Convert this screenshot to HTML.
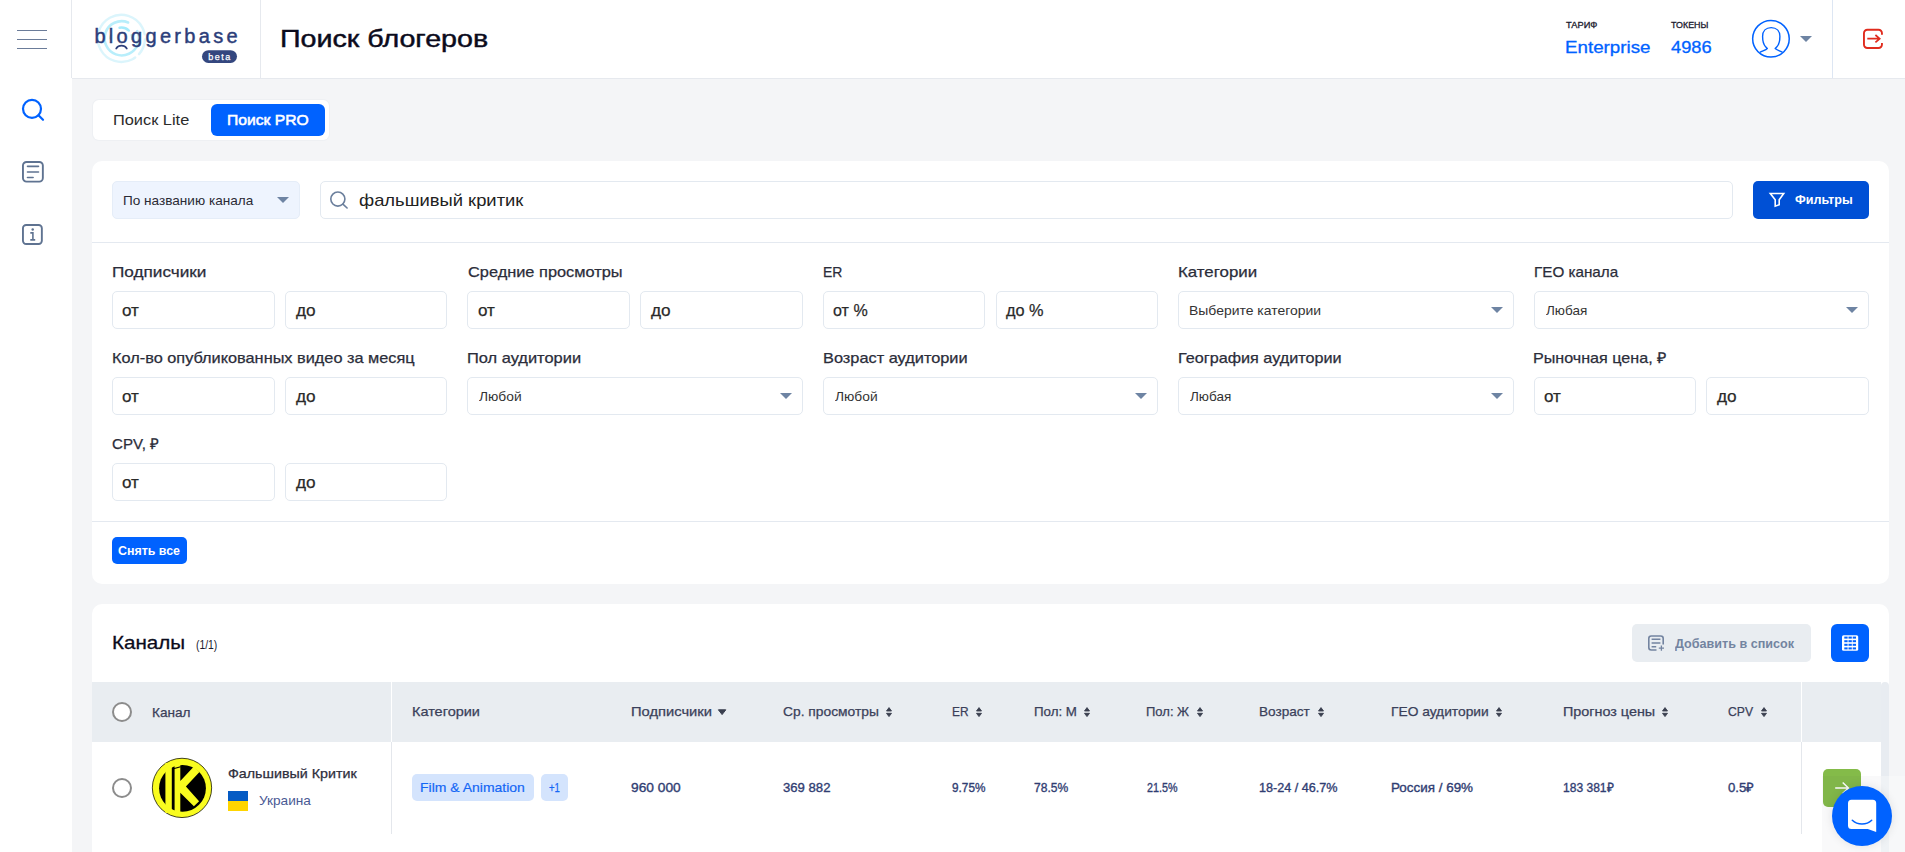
<!DOCTYPE html>
<html lang="ru">
<head>
<meta charset="utf-8">
<title>Поиск блогеров</title>
<style>
*{box-sizing:border-box;margin:0;padding:0}
html,body{width:1905px;height:852px;overflow:hidden;background:#f4f5f7;font-family:"Liberation Sans",sans-serif}
.a{position:absolute}
.t{position:absolute;white-space:pre;font-family:"Liberation Sans",sans-serif;transform-origin:0 0}
.sidebar{left:0;top:0;width:72px;height:852px;background:#fff}
.header{left:72px;top:0;width:1833px;height:79px;background:#fff;border-bottom:1px solid #e6e9ee}
.vline{width:1px;background:#e6e9ee}
.card{background:#fff;border-radius:10px}
.inp{background:#fff;border:1px solid #e3e9f0;border-radius:5px;height:38px}
.hline{height:1px;background:#e4e9f0}
.caret{width:0;height:0;border-left:6px solid transparent;border-right:6px solid transparent;border-top:6px solid #6e84a3}
.btn{border-radius:5px}
</style>
</head>
<body>
<!-- sidebar -->
<div class="a sidebar"></div>
<div class="a" style="left:17px;top:30px;width:30px;height:1px;background:#6b7c99"></div>
<div class="a" style="left:17px;top:39px;width:30px;height:1px;background:#6b7c99"></div>
<div class="a" style="left:17px;top:48px;width:30px;height:1px;background:#6b7c99"></div>
<svg class="a" style="left:21px;top:98px" width="24" height="24" viewBox="0 0 24 24"><circle cx="11" cy="10.800" r="9" stroke="#0062ff" stroke-width="2.200" fill="none"/><path d="M17.500 17.300L22 21.800" stroke="#0062ff" stroke-width="2.200" stroke-linecap="round"/></svg>
<svg class="a" style="left:21px;top:160px" width="24" height="24" viewBox="0 0 24 24"><rect x="1.950" y="1.950" width="19.900" height="19.700" rx="3.600" stroke="#5f7391" stroke-width="1.900" fill="none"/><path d="M6.500 6.300h11M6.500 12h11M6.500 17.500h5.600" stroke="#5f7391" stroke-width="1.650" stroke-linecap="round"/></svg>
<svg class="a" style="left:21px;top:223px" width="24" height="24" viewBox="0 0 24 24"><rect x="1.950" y="1.950" width="18.900" height="19.100" rx="3.200" stroke="#5f7391" stroke-width="1.900" fill="none"/><path d="M9.300 9.900h2.600v7M9.300 16.900h4.900" stroke="#5f7391" stroke-width="1.600" fill="none"/><circle cx="11.700" cy="6.400" r="1.250" fill="#5f7391"/></svg>

<!-- header -->
<div class="a header"></div>
<div class="a vline" style="left:260px;top:0;height:78px"></div>
<div class="a vline" style="left:71px;top:0;height:78px"></div>
<div class="a vline" style="left:1832px;top:0;height:78px;background:#dde6f3"></div>
<svg class="a" style="left:90px;top:10px" width="160" height="60" viewBox="90 10 160 60">
<g fill="none" stroke-linecap="round">
<circle cx="121.400" cy="38.400" r="23.600" stroke="#dbf5fc" stroke-width="2.400" stroke-dasharray="118 5 16 5 4.280 0" transform="rotate(62 121.400 38.400)"/>
<circle cx="121.700" cy="38.300" r="17.100" stroke="#b8eefb" stroke-width="2.600" stroke-dasharray="94 13.440" transform="rotate(-25 121.700 38.300)"/>
<circle cx="121.400" cy="38.400" r="10.800" stroke="#a6ebfb" stroke-width="2.400" stroke-dasharray="10 5.500 4 33 3 12.360" transform="rotate(-100 121.400 38.400)"/>
<path d="M116.200 48.500C117.500 46.500 119.300 45.700 121.500 45.700S125.500 46.500 126.800 48.500" stroke="#2c3e7a" stroke-width="1.700"/>
</g>
<rect x="202" y="50.200" width="35" height="12.700" rx="6.350" fill="#34477f"/>
</svg>
<!-- avatar -->
<svg class="a" style="left:1750px;top:18px" width="42" height="42" viewBox="1750 18 42 42"><circle cx="1770.950" cy="38.800" r="18.300" stroke="#0062ff" stroke-width="1.500" fill="#fff"/><path d="M1759.800 52.400C1763 50.800 1766 50 1767.300 48.600L1765.600 46.800C1763.500 44.500 1762.600 40.500 1762.600 36.500C1762.600 31 1766 27.600 1771.200 27.600C1776.400 27.600 1779.900 31 1779.900 36.500C1779.900 40.500 1779 44.500 1776.900 46.800L1775.200 48.600C1776.500 50 1779.500 50.800 1782.600 52.400" stroke="#0062ff" stroke-width="1.400" fill="none" stroke-linejoin="round"/></svg>
<div class="a caret" style="left:1800px;top:36px"></div>
<!-- logout -->
<svg class="a" style="left:1860px;top:26px" width="26" height="26" viewBox="1860 26 26 26"><path d="M1881.950 34.700V33.200A3.400 3.400 0 0 0 1878.550 29.750H1867.350A3.400 3.400 0 0 0 1863.950 33.200V44.600A3.400 3.400 0 0 0 1867.350 48.050H1878.550A3.400 3.400 0 0 0 1881.950 44.600V43.100" stroke="#e02b1d" stroke-width="1.900" fill="none"/><path d="M1867.300 38.700H1879.600M1875.400 35L1879.700 38.700L1875.400 42.400" stroke="#e02b1d" stroke-width="1.700" fill="none"/></svg>

<!-- tabs -->
<div class="a" style="left:92.500px;top:99.500px;width:236.500px;height:40.500px;background:#fff;border-radius:6px;box-shadow:0 0 0 1px #eef0f3"></div>
<div class="a" style="left:211px;top:104px;width:114px;height:32px;background:#0062ff;border-radius:6px"></div>

<!-- search card -->
<div class="a card" style="left:92px;top:161px;width:1797px;height:423px"></div>
<div class="a" style="left:112px;top:181px;width:188px;height:38px;background:#eef4fe;border:1px solid #e5edf8;border-radius:5px"></div>
<div class="a caret" style="left:277px;top:197px"></div>
<div class="a inp" style="left:320px;top:181px;width:1413px"></div>
<svg class="a" style="left:329px;top:190px" width="20" height="20" viewBox="329 190 20 20"><circle cx="337.850" cy="199.050" r="7.050" stroke="#6b7f9c" stroke-width="1.600" fill="none"/><path d="M342.900 204.100L347.100 208" stroke="#6b7f9c" stroke-width="1.600" stroke-linecap="round"/></svg>
<div class="a btn" style="left:1753px;top:181px;width:116px;height:38px;background:#0050d5"></div>
<svg class="a" style="left:1767px;top:190px" width="20" height="20" viewBox="1767 190 20 20"><path d="M1770.300 193.500H1783.700L1779.200 199.700V204.700L1775.200 206.200V199.700Z" stroke="#fff" stroke-width="1.600" fill="none" stroke-linejoin="miter"/></svg>
<div class="a hline" style="left:92px;top:242px;width:1797px"></div>
<div class="a inp" style="left:112.0px;top:291px;width:162.7px"></div>
<div class="a inp" style="left:284.7px;top:291px;width:162.7px"></div>
<div class="a inp" style="left:467.4px;top:291px;width:162.7px"></div>
<div class="a inp" style="left:640.1px;top:291px;width:162.7px"></div>
<div class="a inp" style="left:822.8px;top:291px;width:162.7px"></div>
<div class="a inp" style="left:995.5px;top:291px;width:162.7px"></div>
<div class="a inp" style="left:1178.2px;top:291px;width:335.4px"></div>
<div class="a caret" style="left:1490.5px;top:307px"></div>
<div class="a inp" style="left:1533.6px;top:291px;width:335.4px"></div>
<div class="a caret" style="left:1845.9px;top:307px"></div>
<div class="a inp" style="left:112.0px;top:377px;width:162.7px"></div>
<div class="a inp" style="left:284.7px;top:377px;width:162.7px"></div>
<div class="a inp" style="left:467.4px;top:377px;width:335.4px"></div>
<div class="a caret" style="left:779.7px;top:393px"></div>
<div class="a inp" style="left:822.8px;top:377px;width:335.4px"></div>
<div class="a caret" style="left:1135.1px;top:393px"></div>
<div class="a inp" style="left:1178.2px;top:377px;width:335.4px"></div>
<div class="a caret" style="left:1490.5px;top:393px"></div>
<div class="a inp" style="left:1533.6px;top:377px;width:162.7px"></div>
<div class="a inp" style="left:1706.3px;top:377px;width:162.7px"></div>
<div class="a inp" style="left:112.0px;top:463px;width:162.7px"></div>
<div class="a inp" style="left:284.7px;top:463px;width:162.7px"></div>
<div class="a hline" style="left:92px;top:521px;width:1797px"></div>
<div class="a btn" style="left:112px;top:537px;width:75px;height:27px;background:#0062ff"></div>

<!-- channels card -->
<div class="a card" style="left:92px;top:604px;width:1797px;height:300px"></div>
<div class="a btn" style="left:1632px;top:624px;width:179px;height:38px;background:#e9edf1"></div>
<svg class="a" style="left:1646px;top:633px" width="22" height="22" viewBox="1646 633 22 22"><path d="M1663.200 644.500V638.500A2.500 2.500 0 0 0 1660.700 636H1651.300A2.500 2.500 0 0 0 1648.800 638.500V647.500A2.500 2.500 0 0 0 1651.300 650H1656.500" stroke="#7384a0" stroke-width="1.600" fill="none"/><path d="M1651.600 639.300h8.800M1651.600 643h8.800M1651.600 646.700h4.600" stroke="#7384a0" stroke-width="1.600"/><path d="M1661.400 645.600v5.200M1658.800 648.200h5.200" stroke="#7384a0" stroke-width="1.300"/></svg>
<div class="a" style="left:1831px;top:624px;width:38px;height:38px;background:#0062ff;border-radius:6px"></div>
<svg class="a" style="left:1841px;top:634px" width="19" height="18" viewBox="1841 634 19 18"><rect x="1842" y="635.200" width="16.200" height="15.600" rx="1.600" fill="#fff"/><g fill="#0062ff"><rect x="1844.300" y="636.600" width="3.300" height="2"/><rect x="1848.500" y="636.600" width="3.300" height="2"/><rect x="1852.700" y="636.600" width="3.300" height="2"/><rect x="1844.300" y="640.200" width="3.300" height="2"/><rect x="1848.500" y="640.200" width="3.300" height="2"/><rect x="1852.700" y="640.200" width="3.300" height="2"/><rect x="1844.300" y="643.800" width="3.300" height="2"/><rect x="1848.500" y="643.800" width="3.300" height="2"/><rect x="1852.700" y="643.800" width="3.300" height="2"/><rect x="1844.300" y="647.400" width="3.300" height="2"/><rect x="1848.500" y="647.400" width="3.300" height="2"/><rect x="1852.700" y="647.400" width="3.300" height="2"/></g></svg>
<!-- table -->
<div class="a" style="left:92px;top:682px;width:1789px;height:60px;background:#e9edf1"></div>
<div class="a" style="left:1881px;top:682px;width:8px;height:170px;background:#e8ecf1;border-radius:4px 4px 0 0"></div>
<div class="a" style="left:390.700px;top:682px;width:1.500px;height:60px;background:#fff"></div>
<div class="a" style="left:391px;top:742px;width:1px;height:92px;background:#e4e7ec"></div>
<div class="a" style="left:1801px;top:682px;width:1px;height:60px;background:#fff"></div>
<div class="a" style="left:1801px;top:742px;width:1px;height:92px;background:#e4e7ec"></div>
<div class="a" style="left:112px;top:702px;width:20px;height:20px;border:2px solid #8c8c8c;border-radius:50%;background:#fff"></div>
<div class="a" style="left:112px;top:778px;width:20px;height:20px;border:2px solid #8c8c8c;border-radius:50%;background:#fff"></div>
<svg class="a" style="left:885.0px;top:706px" width="8" height="12" viewBox="0 0 8 12"><path d="M4 1.6L6.500 5H1.500zM4 10.600L6.500 7.300H1.500z" fill="#3a3f4f" stroke="#3a3f4f" stroke-width="0.900" stroke-linejoin="round"/></svg>
<svg class="a" style="left:974.9px;top:706px" width="8" height="12" viewBox="0 0 8 12"><path d="M4 1.6L6.500 5H1.500zM4 10.600L6.500 7.300H1.500z" fill="#3a3f4f" stroke="#3a3f4f" stroke-width="0.900" stroke-linejoin="round"/></svg>
<svg class="a" style="left:1083.0px;top:706px" width="8" height="12" viewBox="0 0 8 12"><path d="M4 1.6L6.500 5H1.500zM4 10.600L6.500 7.300H1.500z" fill="#3a3f4f" stroke="#3a3f4f" stroke-width="0.900" stroke-linejoin="round"/></svg>
<svg class="a" style="left:1196.1px;top:706px" width="8" height="12" viewBox="0 0 8 12"><path d="M4 1.6L6.500 5H1.500zM4 10.600L6.500 7.300H1.500z" fill="#3a3f4f" stroke="#3a3f4f" stroke-width="0.900" stroke-linejoin="round"/></svg>
<svg class="a" style="left:1316.7px;top:706px" width="8" height="12" viewBox="0 0 8 12"><path d="M4 1.6L6.500 5H1.500zM4 10.600L6.500 7.300H1.500z" fill="#3a3f4f" stroke="#3a3f4f" stroke-width="0.900" stroke-linejoin="round"/></svg>
<svg class="a" style="left:1495.0px;top:706px" width="8" height="12" viewBox="0 0 8 12"><path d="M4 1.6L6.500 5H1.500zM4 10.600L6.500 7.300H1.500z" fill="#3a3f4f" stroke="#3a3f4f" stroke-width="0.900" stroke-linejoin="round"/></svg>
<svg class="a" style="left:1660.8px;top:706px" width="8" height="12" viewBox="0 0 8 12"><path d="M4 1.6L6.500 5H1.500zM4 10.600L6.500 7.300H1.500z" fill="#3a3f4f" stroke="#3a3f4f" stroke-width="0.900" stroke-linejoin="round"/></svg>
<svg class="a" style="left:1760.0px;top:706px" width="8" height="12" viewBox="0 0 8 12"><path d="M4 1.6L6.500 5H1.500zM4 10.600L6.500 7.300H1.500z" fill="#3a3f4f" stroke="#3a3f4f" stroke-width="0.900" stroke-linejoin="round"/></svg>
<svg class="a" style="left:717px;top:708px" width="10" height="8" viewBox="0 0 10 8"><path d="M1.400 1.800h7.400L5.100 6.600z" fill="#3a3f4f" stroke="#3a3f4f" stroke-width="1" stroke-linejoin="round"/></svg>
<!-- avatar -->
<svg class="a" style="left:151px;top:757px" width="62" height="62" viewBox="151 757 62 62"><circle cx="182" cy="787.900" r="29.650" fill="#f9fc1f" stroke="#141400" stroke-width="0.800"/><circle cx="182.500" cy="788.300" r="23.400" fill="#000"/><path d="M165.400 763h6.400v50h-6.400zM174.600 762.500h5.700V781L193.900 766.400L199.500 772.100L185.900 786.600L199.100 801.200L193.900 806.300L180.300 792.700V813.500h-5.700z" fill="#f9fc1f"/><path d="M172.600 769L180.600 766.700" stroke="#000" stroke-width="1.100"/></svg>
<!-- flag -->
<div class="a" style="left:228px;top:791px;width:20px;height:10px;background:#055bc4"></div>
<div class="a" style="left:228px;top:801px;width:20px;height:10px;background:#ffd500"></div>
<!-- tags -->
<div class="a" style="left:412px;top:774px;width:122px;height:27px;background:#d4e4fd;border-radius:5px"></div>
<div class="a" style="left:541px;top:774px;width:27px;height:27px;background:#d4e4fd;border-radius:5px"></div>
<!-- green button -->
<div class="a" style="left:1823px;top:769px;width:38px;height:38px;background:#84bb49;border-radius:5px"></div>
<svg class="a" style="left:1833px;top:780px" width="18" height="16" viewBox="1833 780 18 16"><path d="M1835.200 788h13M1842.700 782.500l5.700 5.500-5.700 5.500" stroke="#fff" stroke-width="1.500" fill="none"/></svg>
<!-- chat overlay -->
<div class="a" style="left:1822px;top:776px;width:59px;height:76px;background:rgba(20,30,60,0.028)"></div>
<div class="a" style="left:1881px;top:776px;width:24px;height:76px;background:rgba(255,255,255,0.300)"></div>
<div class="a" style="left:1832px;top:785.700px;width:60.200px;height:60.200px;border-radius:50%;background:#0062ff;box-shadow:0 0 10px rgba(0,0,0,0.100)"></div>
<svg class="a" style="left:1846px;top:798px" width="32" height="36" viewBox="1846 798 32 36"><path d="M1851.500 799.700H1872.700A3.500 3.500 0 0 1 1876.200 803.200V832L1867.800 829H1851.500A3.500 3.500 0 0 1 1848 825.500V803.200A3.500 3.500 0 0 1 1851.500 799.700z" fill="#fff"/><path d="M1852.300 820.300C1857.500 825.300 1866.500 825.300 1871.700 820.300" stroke="#0062ff" stroke-width="1.500" fill="none" stroke-linecap="round"/></svg>

<span class="t" style="left:279.66px;top:25px;font-size:24px;line-height:27px;color:#0b0b1c;transform:scaleX(1.1929);-webkit-text-stroke:0.45px #0b0b1c;">Поиск блогеров</span>
<span class="t" style="left:1565.99px;top:20px;font-size:9px;line-height:10px;color:#1a1a2e;transform:scaleX(1.0294);-webkit-text-stroke:0.3px #1a1a2e;">ТАРИФ</span>
<span class="t" style="left:1565.13px;top:38px;font-size:17px;line-height:19px;color:#0062ff;transform:scaleX(1.1039);-webkit-text-stroke:0.3px #0062ff;">Enterprise</span>
<span class="t" style="left:1671.2px;top:20px;font-size:9px;line-height:10px;color:#1a1a2e;transform:scaleX(0.9895);-webkit-text-stroke:0.3px #1a1a2e;">ТОКЕНЫ</span>
<span class="t" style="left:1671.31px;top:38px;font-size:17px;line-height:19px;color:#0062ff;transform:scaleX(1.0742);-webkit-text-stroke:0.3px #0062ff;">4986</span>
<span class="t" style="left:112.82px;top:111px;font-size:15px;line-height:17px;color:#2b2b2b;transform:scaleX(1.0904);">Поиск Lite</span>
<span class="t" style="left:226.78px;top:111px;font-size:15px;line-height:17px;color:#ffffff;transform:scaleX(1.0443);-webkit-text-stroke:0.55px #fff;">Поиск PRO</span>
<span class="t" style="left:122.84px;top:193px;font-size:13px;line-height:15px;color:#2b2b35;transform:scaleX(1.0453);">По названию канала</span>
<span class="t" style="left:358.53px;top:191px;font-size:17px;line-height:19px;color:#222;transform:scaleX(1.082);">фальшивый критик</span>
<span class="t" style="left:1794.81px;top:192px;font-size:13.5px;line-height:15px;color:#ffffff;font-weight:700;transform:scaleX(0.9324);">Фильтры</span>
<span class="t" style="left:111.76px;top:263px;font-size:15px;line-height:17px;color:#2b2d3a;transform:scaleX(1.1446);-webkit-text-stroke:0.25px #2b2d3a;">Подписчики</span>
<span class="t" style="left:467.73px;top:263px;font-size:15px;line-height:17px;color:#2b2d3a;transform:scaleX(1.0907);-webkit-text-stroke:0.25px #2b2d3a;">Средние просмотры</span>
<span class="t" style="left:822.81px;top:263px;font-size:15px;line-height:17px;color:#2b2d3a;transform:scaleX(0.9297);-webkit-text-stroke:0.25px #2b2d3a;">ER</span>
<span class="t" style="left:1177.98px;top:263px;font-size:15px;line-height:17px;color:#2b2d3a;transform:scaleX(1.124);-webkit-text-stroke:0.25px #2b2d3a;">Категории</span>
<span class="t" style="left:1533.51px;top:263px;font-size:15px;line-height:17px;color:#2b2d3a;transform:scaleX(1.0154);-webkit-text-stroke:0.25px #2b2d3a;">ГЕО канала</span>
<span class="t" style="left:111.83px;top:349px;font-size:15px;line-height:17px;color:#2b2d3a;transform:scaleX(1.087);-webkit-text-stroke:0.25px #2b2d3a;">Кол-во опубликованных видео за месяц</span>
<span class="t" style="left:467.22px;top:349px;font-size:15px;line-height:17px;color:#2b2d3a;transform:scaleX(1.0949);-webkit-text-stroke:0.25px #2b2d3a;">Пол аудитории</span>
<span class="t" style="left:822.62px;top:349px;font-size:15px;line-height:17px;color:#2b2d3a;transform:scaleX(1.0897);-webkit-text-stroke:0.25px #2b2d3a;">Возраст аудитории</span>
<span class="t" style="left:1178.03px;top:349px;font-size:15px;line-height:17px;color:#2b2d3a;transform:scaleX(1.0805);-webkit-text-stroke:0.25px #2b2d3a;">География аудитории</span>
<span class="t" style="left:1533.44px;top:349px;font-size:15px;line-height:17px;color:#2b2d3a;transform:scaleX(1.0741);-webkit-text-stroke:0.25px #2b2d3a;">Рыночная цена, ₽</span>
<span class="t" style="left:112.39px;top:435px;font-size:15px;line-height:17px;color:#2b2d3a;transform:scaleX(1.0056);-webkit-text-stroke:0.25px #2b2d3a;">CPV, ₽</span>
<span class="t" style="left:122.47px;top:301px;font-size:17px;line-height:19px;color:#2a2a2a;transform:scaleX(1.0029);-webkit-text-stroke:0.25px #2a2a2a;">от</span>
<span class="t" style="left:295.6px;top:301px;font-size:17px;line-height:19px;color:#2a2a2a;transform:scaleX(1.0115);-webkit-text-stroke:0.25px #2a2a2a;">до</span>
<span class="t" style="left:477.87px;top:301px;font-size:17px;line-height:19px;color:#2a2a2a;transform:scaleX(1.0029);-webkit-text-stroke:0.25px #2a2a2a;">от</span>
<span class="t" style="left:651.0px;top:301px;font-size:17px;line-height:19px;color:#2a2a2a;transform:scaleX(1.0115);-webkit-text-stroke:0.25px #2a2a2a;">до</span>
<span class="t" style="left:833.3px;top:301px;font-size:17px;line-height:19px;color:#2a2a2a;transform:scaleX(0.9448);-webkit-text-stroke:0.25px #2a2a2a;">от %</span>
<span class="t" style="left:1006.4px;top:301px;font-size:17px;line-height:19px;color:#2a2a2a;transform:scaleX(0.9585);-webkit-text-stroke:0.25px #2a2a2a;">до %</span>
<span class="t" style="left:122.47px;top:387px;font-size:17px;line-height:19px;color:#2a2a2a;transform:scaleX(1.0029);-webkit-text-stroke:0.25px #2a2a2a;">от</span>
<span class="t" style="left:295.6px;top:387px;font-size:17px;line-height:19px;color:#2a2a2a;transform:scaleX(1.0115);-webkit-text-stroke:0.25px #2a2a2a;">до</span>
<span class="t" style="left:1544.07px;top:387px;font-size:17px;line-height:19px;color:#2a2a2a;transform:scaleX(1.0029);-webkit-text-stroke:0.25px #2a2a2a;">от</span>
<span class="t" style="left:1717.2px;top:387px;font-size:17px;line-height:19px;color:#2a2a2a;transform:scaleX(1.0115);-webkit-text-stroke:0.25px #2a2a2a;">до</span>
<span class="t" style="left:122.47px;top:473px;font-size:17px;line-height:19px;color:#2a2a2a;transform:scaleX(1.0029);-webkit-text-stroke:0.25px #2a2a2a;">от</span>
<span class="t" style="left:295.6px;top:473px;font-size:17px;line-height:19px;color:#2a2a2a;transform:scaleX(1.0115);-webkit-text-stroke:0.25px #2a2a2a;">до</span>
<span class="t" style="left:1189.11px;top:303px;font-size:13px;line-height:15px;color:#333;transform:scaleX(1.0725);">Выберите категории</span>
<span class="t" style="left:1545.6px;top:303px;font-size:13px;line-height:15px;color:#333;transform:scaleX(1.0396);">Любая</span>
<span class="t" style="left:479.4px;top:389px;font-size:13px;line-height:15px;color:#333;transform:scaleX(1.0594);">Любой</span>
<span class="t" style="left:834.8px;top:389px;font-size:13px;line-height:15px;color:#333;transform:scaleX(1.0594);">Любой</span>
<span class="t" style="left:1190.2px;top:389px;font-size:13px;line-height:15px;color:#333;transform:scaleX(1.0396);">Любая</span>
<span class="t" style="left:118.2px;top:544px;font-size:12.5px;line-height:14px;color:#fff;font-weight:700;transform:scaleX(0.9931);">Снять все</span>
<span class="t" style="left:112.09px;top:632px;font-size:19px;line-height:21px;color:#0b0b1c;transform:scaleX(1.0839);-webkit-text-stroke:0.3px #0b0b1c;">Каналы</span>
<span class="t" style="left:195.81px;top:637px;font-size:13px;line-height:15px;color:#1a1a2e;transform:scaleX(0.7977);">(1/1)</span>
<span class="t" style="left:1674.8px;top:636px;font-size:13px;line-height:15px;color:#7384a0;font-weight:700;transform:scaleX(0.9681);">Добавить в список</span>
<span class="t" style="left:151.94px;top:705px;font-size:13px;line-height:15px;color:#3a4160;transform:scaleX(1.0459);-webkit-text-stroke:0.25px #3a3f51;">Канал</span>
<span class="t" style="left:411.67px;top:704px;font-size:13px;line-height:15px;color:#3a4160;transform:scaleX(1.1129);-webkit-text-stroke:0.25px #3a3f51;">Категории</span>
<span class="t" style="left:630.65px;top:704px;font-size:13px;line-height:15px;color:#3a4160;transform:scaleX(1.1314);-webkit-text-stroke:0.25px #3a3f51;">Подписчики</span>
<span class="t" style="left:782.95px;top:704px;font-size:13px;line-height:15px;color:#3a4160;transform:scaleX(1.0616);-webkit-text-stroke:0.25px #3a3f51;">Ср. просмотры</span>
<span class="t" style="left:951.77px;top:704px;font-size:13px;line-height:15px;color:#3a4160;transform:scaleX(0.9161);-webkit-text-stroke:0.25px #3a3f51;">ER</span>
<span class="t" style="left:1033.96px;top:704px;font-size:13px;line-height:15px;color:#3a4160;transform:scaleX(1.0241);-webkit-text-stroke:0.25px #3a3f51;">Пол: М</span>
<span class="t" style="left:1146.08px;top:704px;font-size:13px;line-height:15px;color:#3a4160;transform:scaleX(1.0008);-webkit-text-stroke:0.25px #3a3f51;">Пол: Ж</span>
<span class="t" style="left:1258.54px;top:704px;font-size:13px;line-height:15px;color:#3a4160;transform:scaleX(1.0452);-webkit-text-stroke:0.25px #3a3f51;">Возраст</span>
<span class="t" style="left:1390.72px;top:704px;font-size:13px;line-height:15px;color:#3a4160;transform:scaleX(1.0592);-webkit-text-stroke:0.25px #3a3f51;">ГЕО аудитории</span>
<span class="t" style="left:1562.58px;top:704px;font-size:13px;line-height:15px;color:#3a4160;transform:scaleX(1.1041);-webkit-text-stroke:0.25px #3a3f51;">Прогноз цены</span>
<span class="t" style="left:1727.93px;top:704px;font-size:13px;line-height:15px;color:#3a4160;transform:scaleX(0.9357);-webkit-text-stroke:0.25px #3a3f51;">CPV</span>
<span class="t" style="left:227.93px;top:766px;font-size:13px;line-height:15px;color:#2e2e3c;transform:scaleX(1.0972);-webkit-text-stroke:0.25px #2e2e3c;">Фальшивый Критик</span>
<span class="t" style="left:258.69px;top:793px;font-size:13px;line-height:15px;color:#4a5a94;transform:scaleX(1.0492);">Украина</span>
<span class="t" style="left:420.01px;top:780px;font-size:13.5px;line-height:15px;color:#1467f5;transform:scaleX(1.0348);-webkit-text-stroke:0.2px #1467f5;">Film &amp; Animation</span>
<span class="t" style="left:549.24px;top:781px;font-size:12.5px;line-height:14px;color:#1467f5;transform:scaleX(0.7663);-webkit-text-stroke:0.25px #1467f5;">+1</span>
<span class="t" style="left:631.16px;top:780px;font-size:13px;line-height:15px;color:#303d72;transform:scaleX(1.0573);-webkit-text-stroke:0.35px #303d72;">960 000</span>
<span class="t" style="left:783.19px;top:780px;font-size:13px;line-height:15px;color:#303d72;transform:scaleX(1.0096);-webkit-text-stroke:0.35px #303d72;">369 882</span>
<span class="t" style="left:952.15px;top:780px;font-size:13px;line-height:15px;color:#303d72;transform:scaleX(0.9062);-webkit-text-stroke:0.35px #303d72;">9.75%</span>
<span class="t" style="left:1034.43px;top:780px;font-size:13px;line-height:15px;color:#303d72;transform:scaleX(0.9285);-webkit-text-stroke:0.35px #303d72;">78.5%</span>
<span class="t" style="left:1146.6px;top:780px;font-size:13px;line-height:15px;color:#303d72;transform:scaleX(0.8253);-webkit-text-stroke:0.35px #303d72;">21.5%</span>
<span class="t" style="left:1258.81px;top:780px;font-size:13px;line-height:15px;color:#303d72;transform:scaleX(0.9706);-webkit-text-stroke:0.35px #303d72;">18-24 / 46.7%</span>
<span class="t" style="left:1390.75px;top:780px;font-size:13px;line-height:15px;color:#303d72;transform:scaleX(1.0322);-webkit-text-stroke:0.35px #303d72;">Россия / 69%</span>
<span class="t" style="left:1562.95px;top:780px;font-size:13px;line-height:15px;color:#303d72;transform:scaleX(0.9263);-webkit-text-stroke:0.35px #303d72;">183 381₽</span>
<span class="t" style="left:1728.09px;top:780px;font-size:13px;line-height:15px;color:#303d72;transform:scaleX(1.0155);-webkit-text-stroke:0.35px #303d72;">0.5₽</span>
<span class="t" style="left:94.4px;top:25px;font-size:20px;line-height:22px;color:#2c3e7a;letter-spacing:3.31px;-webkit-text-stroke:0.45px #2c3e7a;">bloggerbase</span>
<span class="t" style="left:208.3px;top:52px;font-size:9px;line-height:10px;color:#ffffff;letter-spacing:1.49px;-webkit-text-stroke:0.25px #fff;">beta</span>
</body>
</html>
